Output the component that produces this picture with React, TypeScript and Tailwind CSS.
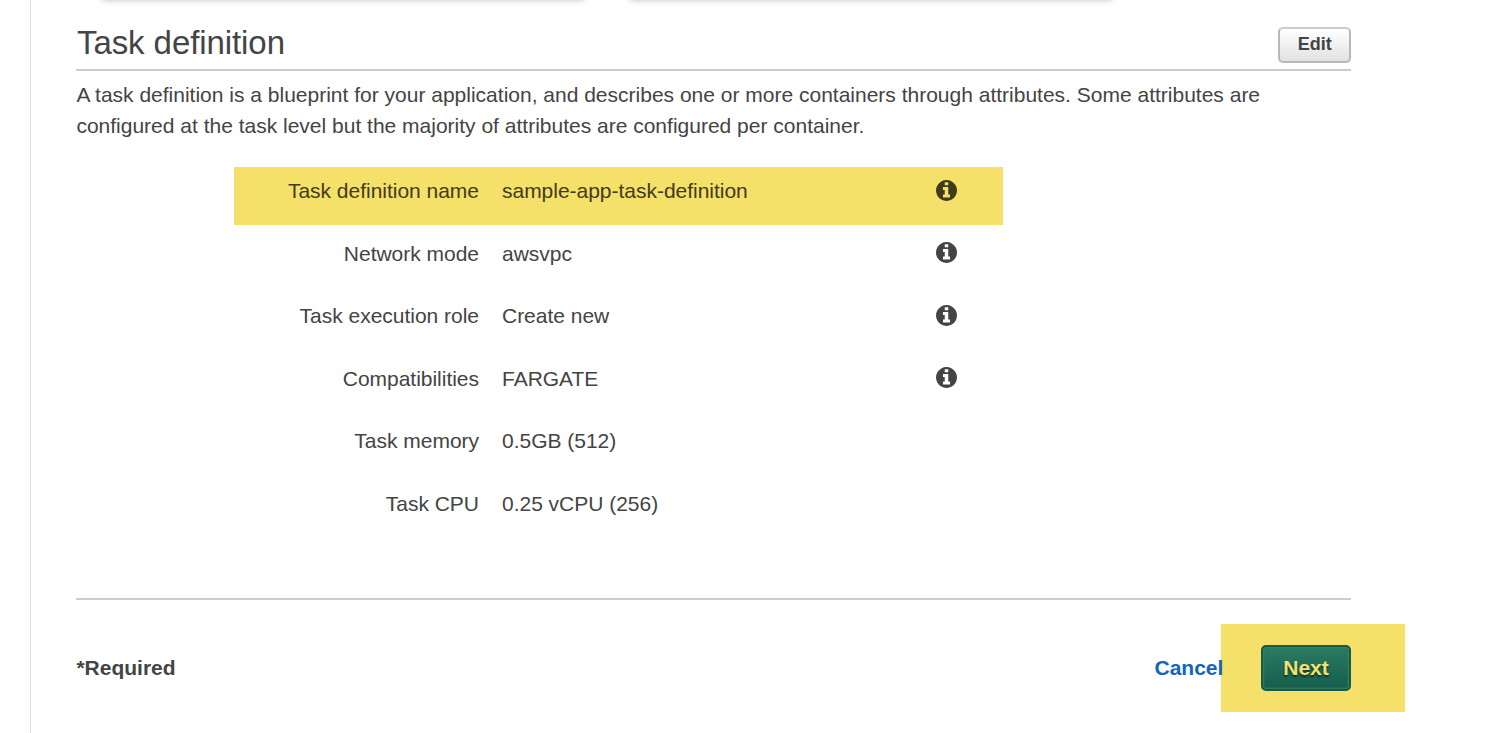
type Row = { label: string; value: string; info?: boolean; highlighted?: boolean };

const rows: Row[] = [
  { label: 'Task definition name', value: 'sample-app-task-definition', info: true, highlighted: true },
  { label: 'Network mode', value: 'awsvpc', info: true },
  { label: 'Task execution role', value: 'Create new', info: true },
  { label: 'Compatibilities', value: 'FARGATE', info: true },
  { label: 'Task memory', value: '0.5GB (512)' },
  { label: 'Task CPU', value: '0.25 vCPU (256)' },
];

function InfoIcon({ highlighted }: { highlighted?: boolean }) {
  return (
    <svg
      viewBox="0 128 1536 1536"
      className={highlighted ? 'h-[21px] w-[21px] fill-[#413b1d]' : 'h-[21px] w-[21px] fill-[#444444]'}
      aria-hidden="true"
    >
      <path d="M1024 1376v-160q0-14-9-23t-23-9h-96v-512q0-14-9-23t-23-9h-320q-14 0-23 9t-9 23v160q0 14 9 23t23 9h96v320h-96q-14 0-23 9t-9 23v160q0 14 9 23t23 9h448q14 0 23-9t9-23zm-128-896v-160q0-14-9-23t-23-9h-192q-14 0-23 9t-9 23v160q0 14 9 23t23 9h192q14 0 23-9t9-23zm640 416q0 209-103 385.5t-279.5 279.5-385.5 103-385.5-103-279.5-279.5-103-385.5 103-385.5 279.5-279.5 385.5-103 385.5 103 279.5 279.5 103 385.5z" />
    </svg>
  );
}

function DetailRow({ label, value, info, highlighted }: Row) {
  return (
    <div className="h-[62.5px]">
      <div
        className={
          highlighted
            ? 'flex h-[58px] w-[769px] bg-[#f5e06a] pt-[8px] text-[#413b1d]'
            : 'flex h-[58px] w-[769px] pt-[8px]'
        }
      >
        <dt className="w-[245px] text-right tracking-[-0.02px]">{label}</dt>
        <dd className="ml-[23px] w-[434px] tracking-[-0.02px]">{value}</dd>
        {info && (
          <dd className="pt-[4.9px]">
            <InfoIcon highlighted={highlighted} />
          </dd>
        )}
      </div>
    </div>
  );
}

export default function App() {
  return (
    <div className="flex h-[733px] w-[1511px] overflow-hidden bg-white font-['Liberation_Sans',Arial,sans-serif] text-[21px] leading-[31px] text-[#444444]">
      <div className="w-[31px] shrink-0 border-r border-[#dddddd]" />
      <main className="ml-[45px] w-[1329px] shrink-0">
        <div className="flex h-[27px] gap-[46px] pl-[26px]">
          <div className="-mt-[20px] h-[18px] w-[482px] shadow-[0_2px_6px_rgba(0,0,0,0.25)]" />
          <div className="-mt-[20px] h-[18px] w-[482px] shadow-[0_2px_6px_rgba(0,0,0,0.25)]" />
        </div>
        <header className="flex h-[44px] w-[1275px] items-start justify-between border-b-2 border-[#cccccc]">
          <h1 className="pl-px text-[33px] leading-[32px] tracking-[-0.08px]">Task definition</h1>
          <button className="h-[36px] w-[73px] rounded-[5px] border-2 border-[#b8b8b8] border-t-[#cccccc] bg-linear-to-b from-white to-[#e2e2e2] pb-[2px] pl-[0.5px] text-[18px] leading-[30px] font-bold">
            Edit
          </button>
        </header>
        <p className="mt-[8px] w-[1230px] pl-[0.4px]">
          A task definition is a blueprint for your application, and describes one or more containers through attributes. Some attributes are
          <br />
          configured at the task level but the majority of attributes are configured per container.
        </p>
        <dl className="mt-[26px] ml-[158px]">
          {rows.map((row) => (
            <DetailRow key={row.label} {...row} />
          ))}
        </dl>
        <div className="mt-[56px] w-[1275px] border-t-2 border-[#cccccc]" />
        <footer className="mt-[24px] flex h-[88px] items-center justify-between font-bold">
          <span className="pb-[2px] pl-[0.4px]">*Required</span>
          <div className="flex items-center">
            <a className="relative z-10 -mr-[2.4px] pb-[2px] text-[#1166bb]">Cancel</a>
            <div className="h-[88px] w-[184px] bg-[#f5e06a] pt-[21px] pl-[40px]">
              <button className="block h-[46px] w-[90px] rounded-[5px] border-2 border-[#135b4b] bg-linear-to-b from-[#2a7b62] to-[#155d4e] pb-[2px] text-[#f5e06a] shadow-[inset_0_0_2px_1px_#407e5c] [text-shadow:0_2px_2px_#092f25]">
                Next
              </button>
            </div>
          </div>
        </footer>
      </main>
    </div>
  );
}
